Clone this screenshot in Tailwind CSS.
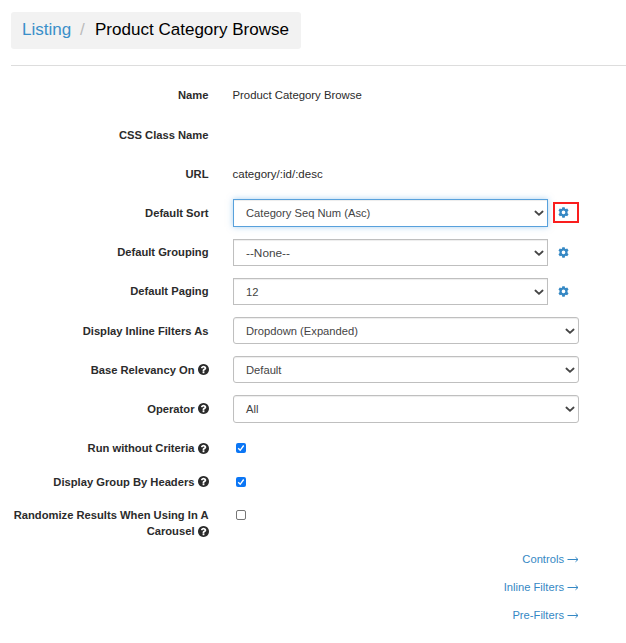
<!DOCTYPE html>
<html lang="en">
<head>
<meta charset="utf-8">
<title>Product Category Browse</title>
<script src="https://cdn.jsdelivr.net/npm/@tailwindcss/browser@4"></script>
</head>
<body class="h-[643px] overflow-hidden bg-white font-['Liberation_Sans',Arial,sans-serif] text-[11.2px] text-[#2b2b2b]">
<svg class="hidden">
  <symbol id="gear" viewBox="0 0 12 12"><path fill="currentColor" fill-rule="evenodd" d="M4.700.300h2.600l.35 1.500.9.450 1.500-.7 1.450 2.250-1.150 1.100v1.900l1.150 1.100-1.450 2.300-1.500-.6-.9.500-.35 1.600H4.700l-.35-1.600-.9-.5-1.500.6L.500 7.900l1.150-1.100V4.900L.500 3.800l1.450-2.250 1.500.7.900-.45zM6 3.900a2 2 0 1 0 0 4 2 2 0 0 0 0-4z"/></symbol>
  <symbol id="help" viewBox="0 0 1536 1536"><path fill="currentColor" d="M896 1248v-192q0-14-9-23t-23-9H672q-14 0-23 9t-9 23v192q0 14 9 23t23 9h192q14 0 23-9t9-23zm256-672q0-88-55.500-163T958 297t-170-41q-243 0-371 213-15 24 8 42l132 100q7 6 19 6 16 0 25-12 53-68 86-92 34-24 86-24 48 0 85.500 26t37.500 59q0 38-20 61t-68 45q-63 28-115.500 86.500T640 892v36q0 14 9 23t23 9h192q14 0 23-9t9-23q0-19 21.500-49.500T972 829q32-18 49-28.500t46-35 44.500-48 28-60.500 12.500-81zm384 192q0 209-103 385.500T1153.500 1433 768 1536t-385.500-103T103 1153.500 0 768t103-385.500T382.500 103 768 0t385.500 103T1433 382.500 1536 768z"/></symbol>
  <symbol id="chev" viewBox="0 0 10 7"><path d="M1.400 1.500 5 4.800l3.600-3.300" fill="none" stroke="#444" stroke-width="1.800" stroke-linecap="round"/></symbol>
</svg>

<header class="ml-[11px] pt-3">
  <nav class="flex h-[37px] w-[290px] items-center rounded-[3px] bg-[#f2f2f2] pl-[11px] pb-px text-[17.050px] leading-none whitespace-nowrap">
    <a class="w-[58px] text-[#3a8fc9]">Listing</a><span class="w-[15px] text-[#bbb]">/</span><span class="text-black">Product Category Browse</span>
  </nav>
  <hr class="mt-4 border-t border-[#ddd]">
</header>

<form class="mt-4 flex w-[579px] flex-col leading-[27px]">
  <div class="flex h-10"><label class="mr-6 w-[208.500px] text-right font-bold">Name</label><span class="text-[11.350px]">Product Category Browse</span></div>
  <div class="flex h-[39px]"><label class="w-[208.500px] text-right font-bold">CSS Class Name</label></div>
  <div class="flex h-[38px]"><label class="mr-6 w-[208.500px] text-right font-bold">URL</label><span class="text-[11.500px]">category/:id/:desc</span></div>

  <div class="flex h-10 items-start">
    <label class="mr-[24.500px] w-[208.500px] pt-px text-right font-bold">Default Sort</label>
    <div class="grid h-7 w-[315px] grid-cols-[1fr_10px] items-center border border-[#58a1dc] pr-[3px] pl-3 text-[#444] shadow-[inset_0_1px_1px_rgba(0,0,0,0.075),0_0_6px_rgba(88,165,225,0.5)]"><span>Category Seq Num (Asc)</span><svg class="h-[7px] w-[10px]"><use href="#chev"/></svg></div>
    <span class="mt-[3px] ml-[5px] flex h-[21px] w-[26px] items-center border-2 border-[#fa1e1e] pl-[3px] text-[#3588c4]"><svg class="size-[11px]"><use href="#gear"/></svg></span>
  </div>
  <div class="flex h-[39px] items-start">
    <label class="mr-[24.500px] w-[208.500px] text-right font-bold">Default Grouping</label>
    <div class="grid h-[27px] w-[315px] grid-cols-[1fr_10px] items-center border border-[#bfbfbf] pr-[3px] pl-3 text-[#444] shadow-[inset_0_1px_1px_rgba(0,0,0,0.075)]"><span class="text-[11.800px]">--None--</span><svg class="-mt-px h-[7px] w-[10px]"><use href="#chev"/></svg></div>
    <svg class="mt-2 ml-[10px] size-[11px] text-[#3588c4]"><use href="#gear"/></svg>
  </div>
  <div class="flex h-[39px] items-start">
    <label class="mr-[24.500px] w-[208.500px] text-right font-bold">Default Paging</label>
    <div class="grid h-[27px] w-[315px] grid-cols-[1fr_10px] items-center border border-[#bfbfbf] pr-[3px] pl-3 text-[#444] shadow-[inset_0_1px_1px_rgba(0,0,0,0.075)]"><span>12</span><svg class="-mt-px h-[7px] w-[10px]"><use href="#chev"/></svg></div>
    <svg class="mt-2 ml-[10px] size-[11px] text-[#3588c4]"><use href="#gear"/></svg>
  </div>
  <div class="flex h-[39px] items-start">
    <label class="mr-[24.500px] w-[208.500px] pt-px text-right font-bold">Display Inline Filters As</label>
    <div class="grid h-[27px] w-[346px] grid-cols-[1fr_10px] items-center rounded-[3px] border border-[#bfbfbf] pr-[3px] pl-3 text-[#444] shadow-[inset_0_1px_1px_rgba(0,0,0,0.075)]"><span>Dropdown (Expanded)</span><svg class="-mt-px h-[7px] w-[10px]"><use href="#chev"/></svg></div>
  </div>
  <div class="flex h-[39px] items-start">
    <label class="mr-[24.500px] flex w-[208.500px] items-center justify-end gap-[3px] font-bold"><span class="relative top-px">Base Relevancy On</span> <svg class="size-[11px]"><use href="#help"/></svg></label>
    <div class="grid h-[27px] w-[346px] grid-cols-[1fr_10px] items-center rounded-[3px] border border-[#bfbfbf] pr-[3px] pl-3 text-[#444] shadow-[inset_0_1px_1px_rgba(0,0,0,0.075)]"><span>Default</span><svg class="-mt-px h-[7px] w-[10px]"><use href="#chev"/></svg></div>
  </div>
  <div class="flex h-10 items-start">
    <label class="mr-[24.500px] flex w-[208.500px] items-center justify-end gap-[3px] font-bold"><span class="relative top-px">Operator</span> <svg class="size-[11px]"><use href="#help"/></svg></label>
    <div class="grid h-7 w-[346px] grid-cols-[1fr_10px] items-center rounded-[3px] border border-[#bfbfbf] pr-[3px] pl-3 text-[#444] shadow-[inset_0_1px_1px_rgba(0,0,0,0.075)]"><span>All</span><svg class="h-[7px] w-[10px]"><use href="#chev"/></svg></div>
  </div>

  <div class="flex h-[33px] items-start">
    <label class="flex w-[208.500px] items-center justify-end gap-[3px] font-bold">Run without Criteria <svg class="size-[11px]"><use href="#help"/></svg></label>
    <svg class="mt-2 ml-[27.500px] size-[10px] rounded-[2px] bg-[#0b76f5]" viewBox="0 0 10 10"><path d="M2.200 5.300 4.200 7.300 7.700 2.500" fill="none" stroke="white" stroke-width="1.400"/></svg>
  </div>
  <div class="flex h-[39px] items-start">
    <label class="flex w-[208.500px] items-center justify-end gap-[3px] font-bold"><span class="relative top-px">Display Group By Headers</span> <svg class="size-[11px]"><use href="#help"/></svg></label>
    <svg class="mt-[9px] ml-[27.500px] size-[10px] rounded-[2px] bg-[#0b76f5]" viewBox="0 0 10 10"><path d="M2.200 5.300 4.200 7.300 7.700 2.500" fill="none" stroke="white" stroke-width="1.400"/></svg>
  </div>
  <div class="flex h-[38px] items-start leading-4">
    <label class="w-[208.500px] text-right font-bold whitespace-nowrap">Randomize Results When Using In A<br><span class="flex items-center justify-end gap-[3px]">Carousel <svg class="size-[11px]"><use href="#help"/></svg></span></label>
    <span class="mt-[3px] ml-[27.500px] size-[10px] rounded-[2px] border border-[#767676]"></span>
  </div>

  <div class="flex flex-col items-end text-[#3588c4] leading-7">
    <a class="flex items-center gap-[3px]">Controls <svg class="mt-px h-[7px] w-[12px]" viewBox="0 0 12 7" fill="none" stroke="currentColor"><path d="M.5 3.500H11M8.500 1.200 11 3.500 8.500 5.800"/></svg></a>
    <a class="flex items-center gap-[3px]">Inline Filters <svg class="mt-px h-[7px] w-[12px]" viewBox="0 0 12 7" fill="none" stroke="currentColor"><path d="M.5 3.500H11M8.500 1.200 11 3.500 8.500 5.800"/></svg></a>
    <a class="flex items-center gap-[3px]">Pre-Filters <svg class="mt-px h-[7px] w-[12px]" viewBox="0 0 12 7" fill="none" stroke="currentColor"><path d="M.5 3.500H11M8.500 1.200 11 3.500 8.500 5.800"/></svg></a>
  </div>
</form>
</body>
</html>
